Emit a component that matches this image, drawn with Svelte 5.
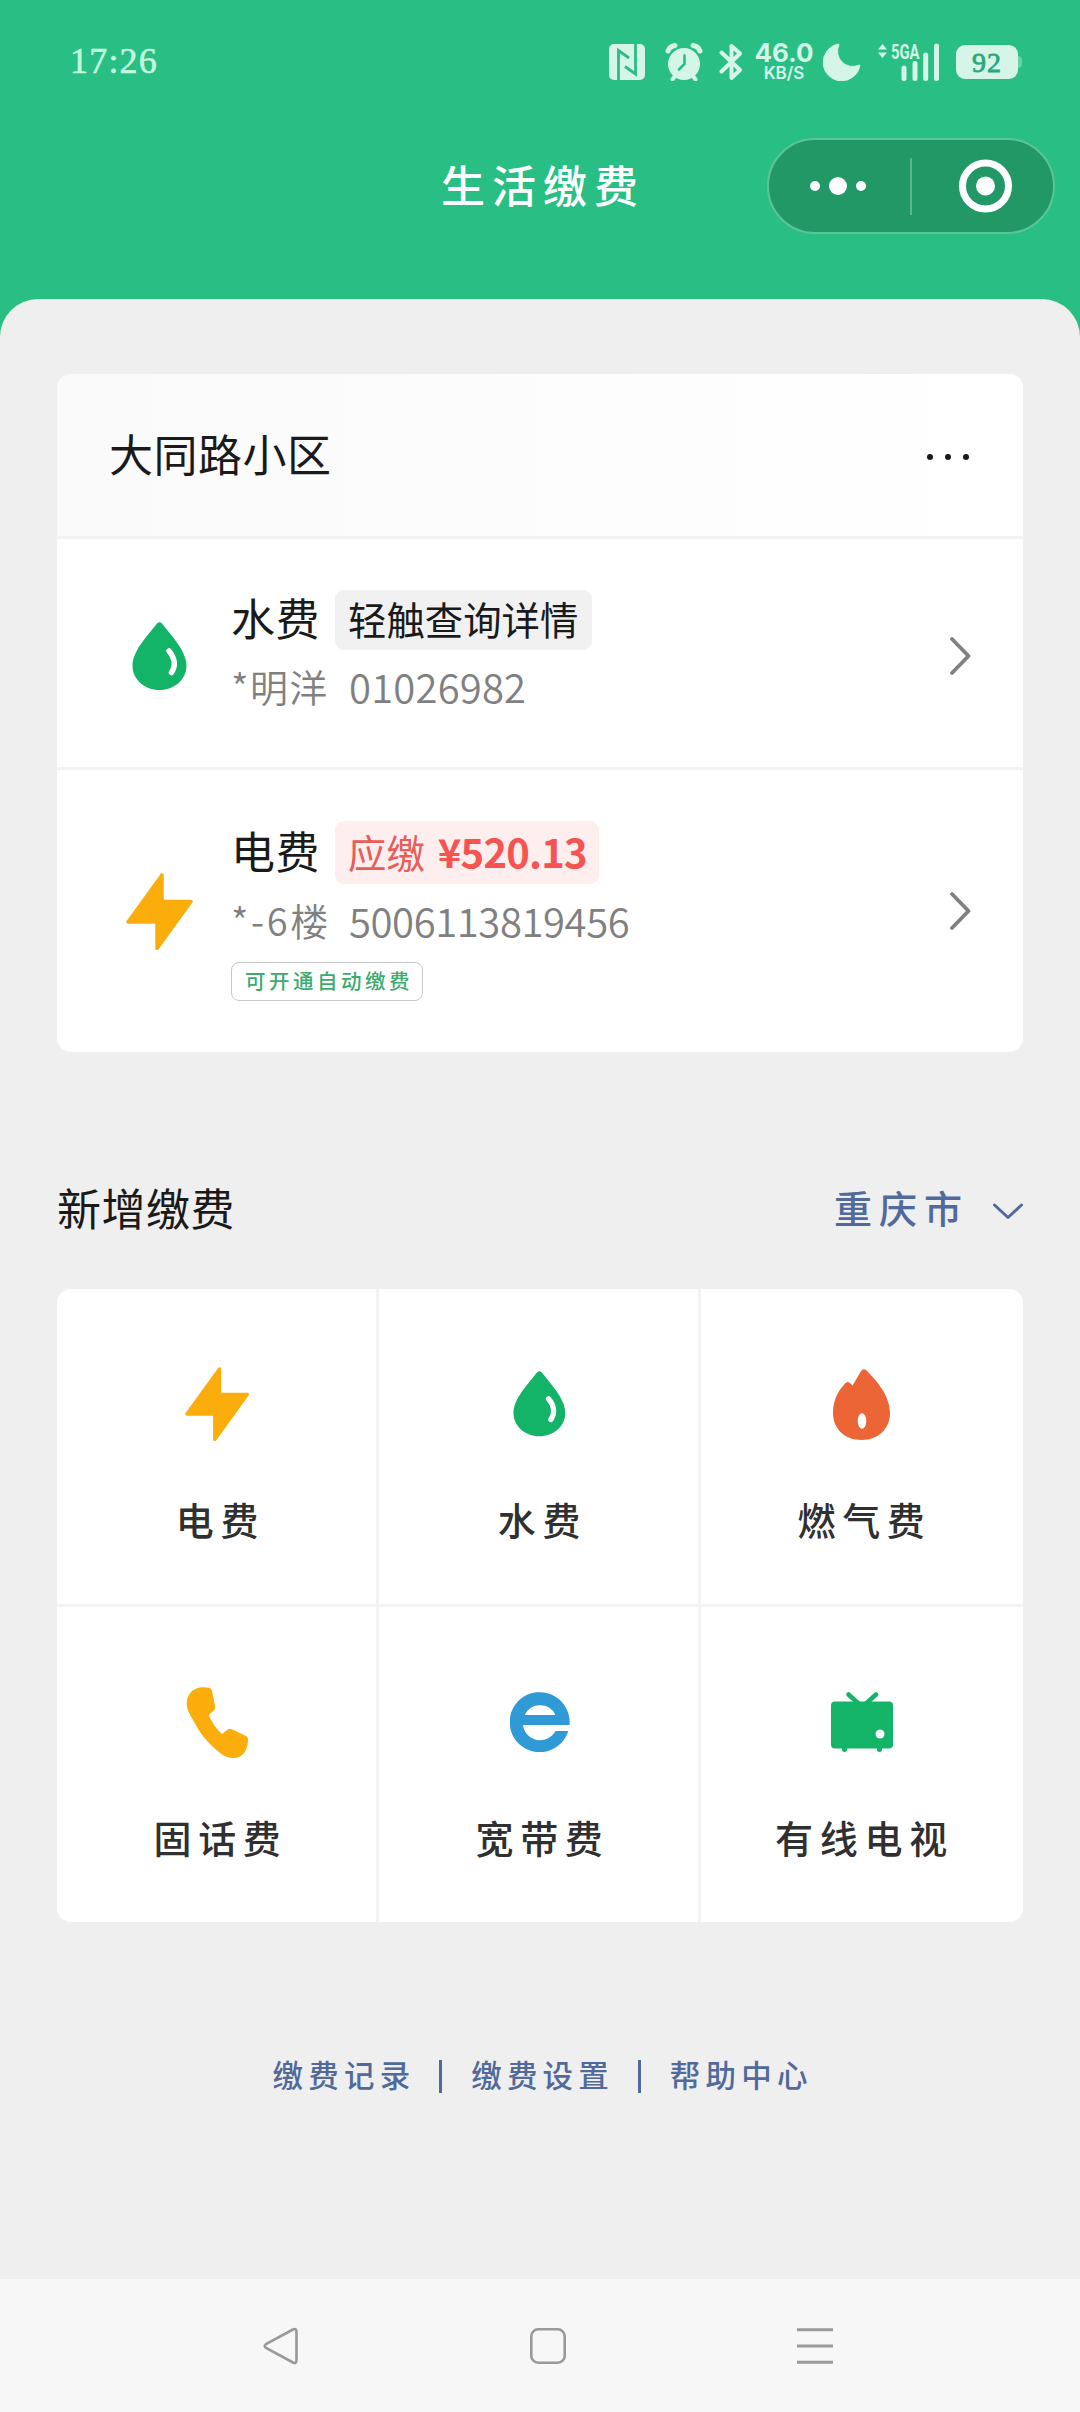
<script lang="ts">
	const community = '大同路小区';
	const city = '重庆市';

	const bills = [
		{ icon: 'water', name: '水费', tag: '轻触查询详情', owner: '*明洋', account: '01026982' },
		{ icon: 'power', name: '电费', tag: '应缴', amount: '¥520.13', owner: '*-6楼', account: '5006113819456', auto: '可开通自动缴费' }
	];

	const services = [
		{ icon: 'power', name: '电费' },
		{ icon: 'water', name: '水费' },
		{ icon: 'gas', name: '燃气费' },
		{ icon: 'phone', name: '固话费' },
		{ icon: 'broadband', name: '宽带费' },
		{ icon: 'tv', name: '有线电视' }
	];

	const links = ['缴费记录', '缴费设置', '帮助中心'];
</script>

{#snippet icon(name, scale = 1)}
	{#if name === 'water'}
		<svg width={55 * scale} height={68 * scale} viewBox="0 0 55 68">
			<path d="M25 1.5Q27.500 -1 30 1.500C39 13 54.500 29 54.500 43.500C54.500 58 42 68 27.500 68S.5 58 .5 43.500C.5 29 16 13 25 1.500Z" fill="#14b468" />
			<path d="M37 29C43 36 44 44 39.500 50.500" fill="none" stroke="#fff" stroke-width="5.500" stroke-linecap="round" />
		</svg>
	{:else if name === 'power'}
		<svg width={67 * scale} height={77 * scale} viewBox="0 0 67 77">
			<path d="M36 2V28.500H65L31 75.500V49H2Z" fill="#fbad0c" stroke="#fbad0c" stroke-width="3.500" stroke-linejoin="round" />
		</svg>
	{:else if name === 'gas'}
		<svg width="57" height="71" viewBox="0 0 57 71">
			<path d="M28.500 1.500Q31 -1 33.500 1.500C44 12 57 27 57 44C57 60 45 71 28.500 71S0 60 0 44C0 31 5 22 12 14.500Q15 11.500 17.500 14.500L19.500 16.500Z" fill="#eb6536" />
			<ellipse cx="29" cy="52" rx="4.300" ry="7.700" fill="#fff" />
		</svg>
	{:else if name === 'phone'}
		<svg width="63" height="71" viewBox="0 0 63 71">
			<path d="M16 .3C19 0 21 .3 23 .7Q25.500 1 26 4L29.300 20Q29.500 22 28 23.300L22.700 28Q27 39 36 47L42 42.300Q44 41 46 42.300L60 49Q62.500 50.500 62 54C61 65 56 71 47 71C41 71 36 68 31 63.500C21 55 14 46 9 36.500C5 29 1 24 .7 17C.5 8 6 1 16 .3Z" fill="#fbad0c" />
		</svg>
	{:else if name === 'broadband'}
		<svg width="60" height="60" viewBox="0 0 60 60">
			<path d="M59.500 33A30 30 0 1 0 58.300 39H45.500A17.300 17.300 0 0 1 13 33ZM14.700 23A17 17 0 0 1 45.500 23Z" fill="#2f9ad5" fill-rule="evenodd" />
		</svg>
	{:else if name === 'tv'}
		<svg width="62" height="60" viewBox="0 0 62 60">
			<rect y="9.500" width="62" height="47" rx="4" fill="#14b468" />
			<path d="M17.500 2.500 28 12M45 2.500 34.500 12" stroke="#14b468" stroke-width="4.500" stroke-linecap="round" />
			<path d="M13.500 55v2.500M48.500 55v2.500" stroke="#14b468" stroke-width="5" stroke-linecap="round" />
			<circle cx="49" cy="42" r="4.500" fill="#fff" />
		</svg>
	{/if}
{/snippet}

<div class="screen">
	<header>
		<div class="status">
			<span class="clock">17:26</span>
			<div class="indicators">
				<svg width="36" height="36" viewBox="0 0 36 36">
					<rect width="36" height="36" rx="5" fill="#d4f5e7" />
					<path d="M9.500 36V6.500L20 14M26.500 0V30L16 22.500" fill="none" stroke="#29bf84" stroke-width="2.800" />
				</svg>
				<svg class="alarm" width="38" height="38" viewBox="0 0 38 38">
					<circle cx="19" cy="21" r="16" fill="#d4f5e7" />
					<path d="M3 8Q5 3 10 2.500M35 8Q33 3 28 2.500" fill="none" stroke="#d4f5e7" stroke-width="5" stroke-linecap="round" />
					<path d="M10 33 7.500 36.500M28 33 30.500 36.500" stroke="#d4f5e7" stroke-width="4" stroke-linecap="round" />
					<path d="M19.500 12.500V21L14 26.500" fill="none" stroke="#29bf84" stroke-width="2.600" stroke-linecap="round" />
				</svg>
				<svg class="bluetooth" width="24" height="38" viewBox="0 0 24 38">
					<path d="M2.500 9.500 21 27 12.500 35V3L21 10.500 2.500 28.500" fill="none" stroke="#d4f5e7" stroke-width="4" stroke-linejoin="round" stroke-linecap="round" />
				</svg>
				<div class="speed">
					<b>46.0</b>
					<small>KB/S</small>
				</div>
				<svg class="moon" width="38" height="38" viewBox="0 0 38 38">
					<path d="M16 1A18.500 18.500 0 1 0 37 22Q26 26 19 19T16 1Z" fill="#d4f5e7" stroke="#d4f5e7" stroke-linejoin="round" />
				</svg>
				<div class="signal">
					<svg width="63" height="38" viewBox="0 0 63 38">
						<path d="M1 6.500 5.500 1 10 6.500ZM1 9.500 5.500 15 10 9.500Z" fill="#d4f5e7" />
						<path d="M27 25V35.500M38 20.500V35.500M48.700 12V35.500M59.500 3V35.500" stroke="#d4f5e7" stroke-width="5" stroke-linecap="round" />
					</svg>
					<span>5GA</span>
				</div>
				<div class="battery">92</div>
				<i class="nub"></i>
			</div>
		</div>

		<div class="titlebar">
			<h1>生活缴费</h1>
			<div class="capsule">
				<svg width="284" height="92" viewBox="0 0 284 92">
					<g fill="#fff">
						<circle cx="46" cy="46" r="5" />
						<circle cx="69" cy="46" r="9" />
						<circle cx="92" cy="46" r="5" />
						<circle cx="216.500" cy="46" r="9.500" />
					</g>
					<path d="M142 18V75" stroke="#5db48f" stroke-width="2" />
					<circle cx="216.500" cy="46" r="23" fill="none" stroke="#fff" stroke-width="7" />
				</svg>
			</div>
		</div>
	</header>

	<main>
		<section class="card">
			<div class="card-head">
				<h2>{community}</h2>
				<svg width="42" height="10" viewBox="0 0 42 10" fill="#1a1a1a">
					<circle cx="3" cy="7" r="3" />
					<circle cx="21" cy="7" r="3" />
					<circle cx="39" cy="7" r="3" />
				</svg>
			</div>
			{#each bills as bill}
				<div class="bill" class:due={bill.amount}>
					<div class="bill-icon">{@render icon(bill.icon)}</div>
					<div class="info">
						<div class="line">
							<strong>{bill.name}</strong>
							<span class="tag">{bill.tag}{#if bill.amount}<b>{bill.amount}</b>{/if}</span>
						</div>
						<div class="account">
							<span class="owner">{bill.owner}</span>
							<span class="number">{bill.account}</span>
						</div>
						{#if bill.auto}
							<div class="auto">{bill.auto}</div>
						{/if}
					</div>
					<svg width="22" height="40" viewBox="0 0 22 40">
						<path d="M3 3 19.500 20 3 37" fill="none" stroke="#808080" stroke-width="3.800" stroke-linecap="round" stroke-linejoin="round" />
					</svg>
				</div>
			{/each}
		</section>

		<div class="section-head">
			<h2>新增缴费</h2>
			<div class="city">
				<span>{city}</span>
				<svg width="30" height="22" viewBox="0 0 30 22">
					<path d="M1.500 7 15 19.500 28.500 7" fill="none" stroke="#516a9b" stroke-width="3" stroke-linecap="round" stroke-linejoin="round" />
				</svg>
			</div>
		</div>

		<section class="grid">
			{#each services as service}
				<div class="cell">
					<div class="cell-icon">{@render icon(service.icon, 0.96)}</div>
					<span>{service.name}</span>
				</div>
			{/each}
		</section>

		<footer>
			{#each links as link, i}
				{#if i > 0}<i></i>{/if}
				<span>{link}</span>
			{/each}
		</footer>
	</main>

	<nav>
		<svg width="36" height="38" viewBox="0 0 36 38">
			<path d="M30 2.500 3 17Q.5 19 3 21L30 35.500Q33.500 37 33.500 33V5Q33.500 1 30 2.500Z" fill="none" stroke="#999" stroke-width="2.600" />
		</svg>
		<svg width="36" height="38" viewBox="0 0 36 38">
			<rect x="1.300" y="2.300" width="33.400" height="33.400" rx="7" fill="none" stroke="#999" stroke-width="2.600" />
		</svg>
		<svg width="36" height="38" viewBox="0 0 36 38">
			<path d="M0 2.700H36M0 19H36M0 35.300H36" stroke="#999" stroke-width="3" />
		</svg>
	</nav>
</div>

<style>
	:global(body) {
		background: #29bf84;
	}

	.screen {
		display: flex;
		flex-direction: column;
		width: 1080px;
		height: 2412px;
		overflow: hidden;
		background: #29bf84;
		color: #1a1a1a;
		font-family: "Noto Sans CJK SC", sans-serif;
	}

	svg {
		display: block;
		flex: none;
	}

	h1, h2 {
		margin: 0;
		font-weight: 400;
	}

	header {
		height: 299px;
		flex: none;
	}

	.status {
		display: flex;
		justify-content: space-between;
		align-items: center;
		height: 124px;
		padding: 0 58px 0 70px;
		color: #d4f5e7;
	}

	.clock {
		font: 36px/40px "Liberation Serif", serif;
		letter-spacing: 1.2px;
		-webkit-text-stroke: 0.6px #c4f9df;
		color: #c4f9df;
		padding-bottom: 2px;
	}

	.indicators {
		display: flex;
		align-items: center;
	}

	.alarm {
		margin-left: 20px;
	}

	.bluetooth {
		margin-left: 16px;
	}

	.speed {
		width: 62px;
		margin-left: 10px;
		display: flex;
		flex-direction: column;
		align-items: center;
		gap: 3px;
		font-family: Inter, sans-serif;
	}

	.speed b {
		font-size: 26px;
		line-height: 20px;
		font-weight: 700;
	}

	.speed small {
		font-size: 17px;
		line-height: 15px;
		font-weight: 600;
	}

	.moon {
		margin-left: 8px;
	}

	.signal {
		position: relative;
		margin-left: 16px;
	}

	.signal span {
		position: absolute;
		left: 14px;
		top: 0;
		font: 700 20px/18px Roboto, sans-serif;
		transform: scaleX(0.74);
		transform-origin: left;
	}

	.battery {
		width: 62px;
		height: 34px;
		margin-left: 16px;
		border-radius: 9px;
		background: #d4f5e7;
		color: #29a878;
		text-align: center;
		font: 28px/36px "Liberation Serif", serif;
		-webkit-text-stroke: 0.8px #29a878;
		letter-spacing: 1px;
	}

	.nub {
		width: 4px;
		height: 12px;
		border-radius: 0 4px 4px 0;
		background: #66d2a8;
	}

	.titlebar {
		display: grid;
		grid-template-columns: 1fr auto 1fr;
		align-items: center;
		height: 124px;
		padding: 0 25px;
	}

	h1 {
		grid-column: 2;
		color: #fff;
		font-size: 44px;
		font-weight: 500;
		line-height: 60px;
		letter-spacing: 7px;
		padding: 0 0 5px 6px;
	}

	.capsule {
		justify-self: end;
		border: 2px solid #5dc49a;
		border-radius: 48px;
		background: #229867;
	}

	main {
		flex: 1;
		padding: 75px 57px 0;
		border-radius: 38px 38px 0 0;
		background: #efefef;
	}

	.card {
		border-radius: 14px;
		background: #fff;
		overflow: hidden;
	}

	.card-head {
		display: flex;
		justify-content: space-between;
		align-items: center;
		height: 162px;
		padding: 0 54px 0 52px;
		background: linear-gradient(90deg, #fafafa, #fff);
	}

	h2 {
		padding-bottom: 3px;
		font-size: 44px;
		line-height: 57px;
		letter-spacing: 0.500px;
	}

	.bill {
		display: flex;
		align-items: center;
		height: 223px;
		padding: 5px 52px 0 68px;
		border-top: 3px solid #f1f2f2;
	}

	.bill.due {
		height: 282px;
		padding-top: 0;
	}

	.bill-icon {
		display: flex;
		justify-content: center;
		width: 69px;
		margin-right: 37px;
	}

	.info {
		flex: 1;
		padding-bottom: 9px;
	}

	.due .info {
		padding-bottom: 0;
	}

	.line {
		display: flex;
		align-items: center;
		gap: 15px;
	}

	.line strong {
		padding-bottom: 5px;
		font-size: 44px;
		line-height: 55px;
		font-weight: 400;
		letter-spacing: 0.500px;
	}

	.tag {
		padding: 0 14px 4px 13px;
		border-radius: 9px;
		background: #f1f1f1;
		font-size: 38.400px;
		line-height: 56px;
		white-space: nowrap;
	}

	.due .tag {
		display: flex;
		gap: 13px;
		padding: 0 12px 3px 13px;
		background: #feeeee;
		color: #e65d5a;
		line-height: 60px;
	}

	.tag b {
		color: #f55451;
		font-size: 40px;
		letter-spacing: -0.800px;
	}

	.account {
		display: flex;
		gap: 22px;
		margin-top: 13px;
		padding-bottom: 4px;
		color: #808080;
		font-size: 38px;
		line-height: 46px;
		font-weight: 350;
	}

	.owner {
		width: 96px;
		letter-spacing: 1.400px;
		white-space: nowrap;
	}

	.due .owner {
		letter-spacing: 2.600px;
	}

	.number {
		font-size: 40px;
		letter-spacing: 0.200px;
	}

	.due .number {
		letter-spacing: -0.400px;
	}

	.auto {
		width: fit-content;
		margin-top: 15px;
		padding: 0 9px 2px 13px;
		border: 1.500px solid #c8c8c8;
		border-radius: 8px;
		color: #3bab70;
		font-size: 20.500px;
		line-height: 35px;
		font-weight: 500;
		letter-spacing: 3.500px;
	}

	.section-head {
		display: flex;
		justify-content: space-between;
		align-items: center;
		height: 60px;
		margin: 127px 0 50px;
	}

	.city {
		display: flex;
		align-items: center;
		gap: 24px;
		color: #516a9b;
		font-size: 38px;
		font-weight: 500;
		letter-spacing: 7px;
	}

	.city span {
		padding-bottom: 5px;
	}

	.grid {
		display: grid;
		grid-template-columns: 319px 319px 1fr;
		grid-auto-rows: 315px;
		gap: 3px;
		border-radius: 14px;
		background: #f3f3f6;
		overflow: hidden;
	}

	.cell {
		display: flex;
		flex-direction: column;
		align-items: center;
		padding: 75px 0 0 2px;
		background: #fff;
	}

	.cell:nth-child(3n) {
		padding: 75px 1px 0 0;
	}

	.cell-icon {
		display: flex;
		align-items: center;
		height: 80px;
	}

	.cell span {
		margin-top: 45px;
		padding-left: 6px;
		color: #303030;
		font-size: 38px;
		line-height: 60px;
		font-weight: 500;
		letter-spacing: 6.700px;
	}

	footer {
		display: flex;
		justify-content: center;
		align-items: center;
		gap: 29px;
		margin-top: 134px;
		color: #516a9b;
		font-size: 30.500px;
		line-height: 37px;
	}

	footer span {
		padding-bottom: 3px;
		font-weight: 500;
		letter-spacing: 5.200px;
		margin-right: -5.200px;
	}

	footer i {
		width: 3px;
		height: 33px;
		background: #516a9b;
	}

	nav {
		display: flex;
		justify-content: center;
		gap: 231px;
		height: 85px;
		padding: 48px 0 0 16px;
		background: #f7f7f7;
	}
</style>
